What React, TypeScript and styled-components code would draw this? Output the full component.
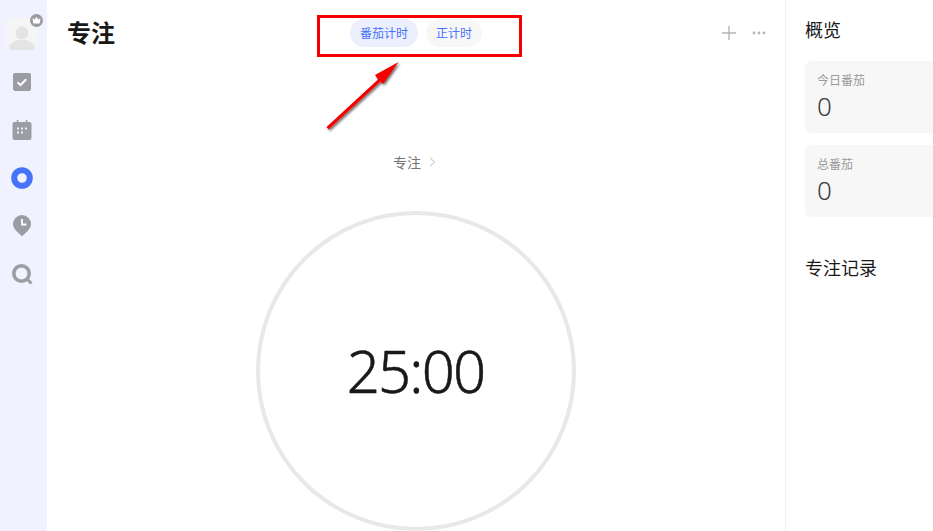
import styled, { createGlobalStyle } from "styled-components";

const GlobalStyle = createGlobalStyle`
  html, body {
    margin: 0;
    padding: 0;
    height: 100%;
    overflow: hidden;
    background: #fff;
  }
  body {
    font-family: "Noto Sans CJK SC", "Noto Sans", sans-serif;
  }
`;

function App() {
  return (
    <Page>
      <GlobalStyle />
      <Sidebar>
        <AvatarWrap>
          <Avatar>
            <svg width="32" height="32" viewBox="0 0 32 32">
              <circle cx="16" cy="15" r="6.500" fill="#e4e4e4" />
              <path d="M3 32c0-6 4-9 9-10h8c5 1 9 4 9 10z" fill="#e4e4e4" />
            </svg>
          </Avatar>
          <Crown>
            <svg width="13" height="13" viewBox="0 0 13 13">
              <circle cx="6.500" cy="6.500" r="6.500" fill="#9a9a9f" />
              <path d="M2.500 4l2.200 1.400L6.500 2.800l1.800 2.600L10.500 4l-.8 5.500H3.300z" fill="#fff" />
            </svg>
          </Crown>
        </AvatarWrap>
        <NavIcon>
          <svg width="18" height="18" viewBox="0 0 18 18">
            <rect width="18" height="18" rx="2" fill="#9c9ca3" />
            <path d="M4.500 9.300l3 2.900 5.700-6" fill="none" stroke="#fff" strokeWidth="2" />
          </svg>
        </NavIcon>
        <NavIcon>
          <svg width="20" height="20" viewBox="0 0 20 20">
            <rect x="0.500" y="2" width="19" height="18" rx="2" fill="#9c9ca3" />
            <path d="M5.500 0v3.500M14.500 0v3.500" stroke="#9c9ca3" strokeWidth="1.500" />
            <path d="M5 8.500h2M9 8.500h2M13 8.500h2M5 12.500h2M9 12.500h2" stroke="#f0f3ff" strokeWidth="1.800" />
          </svg>
        </NavIcon>
        <NavIcon>
          <svg width="22" height="22" viewBox="0 0 22 22">
            <circle cx="11" cy="11" r="7.800" fill="none" stroke="#4772fa" strokeWidth="6" />
          </svg>
        </NavIcon>
        <NavIcon>
          <svg width="18" height="22" viewBox="0 0 18 22">
            <path d="M9 21.500C7 18.500 0 15 0 9a9 9 0 0 1 18 0c0 6-7 9.500-9 12.500z" fill="#9c9ca3" />
            <path d="M9 4V9.500h4.500" fill="none" stroke="#fff" strokeWidth="1.800" />
          </svg>
        </NavIcon>
        <NavIcon>
          <svg width="21" height="21" viewBox="0 0 21 21">
            <circle cx="9.500" cy="9.500" r="7.700" fill="none" stroke="#9c9ca3" strokeWidth="3.600" />
            <path d="M15 15l4.500 4.500" stroke="#9c9ca3" strokeWidth="3" />
          </svg>
        </NavIcon>
      </Sidebar>

      <Main>
        <Header>
          <Title>专注</Title>
          <Tabs>
            <Tab $active>番茄计时</Tab>
            <Tab>正计时</Tab>
          </Tabs>
          <Actions>
            <svg width="14" height="14" viewBox="0 0 14 14">
              <path d="M7 0v14M0 7h14" stroke="#b4b4b4" strokeWidth="1.400" />
            </svg>
            <svg width="14" height="4" viewBox="0 0 14 4">
              <circle cx="2" cy="2" r="1.400" fill="#b4b4b4" />
              <circle cx="7" cy="2" r="1.400" fill="#b4b4b4" />
              <circle cx="12" cy="2" r="1.400" fill="#b4b4b4" />
            </svg>
          </Actions>
        </Header>
        <FocusLink>
          专注
          <svg width="7" height="10" viewBox="0 0 7 10">
            <path d="M1 .8L5.500 5 1 9.200" fill="none" stroke="#b9b9b9" strokeWidth="1" />
          </svg>
        </FocusLink>
        <Timer>25:00</Timer>
        <Highlight />
        <Arrow width="90" height="90" viewBox="0 0 90 90">
          <defs>
            <filter id="arrow-shadow" x="-20%" y="-20%" width="150%" height="150%">
              <feDropShadow dx="1.500" dy="1.500" stdDeviation="1.200" floodColor="#000" floodOpacity="0.6" />
            </filter>
          </defs>
          <path
            d="M6.500 71L58 23.500 55 19 78.500 6 63 28 60.500 25.500 8.500 73.500z"
            fill="#f50000"
            filter="url(#arrow-shadow)"
          />
        </Arrow>
      </Main>

      <Aside>
        <AsideTitle>概览</AsideTitle>
        <StatCard>
          <StatLabel>今日番茄</StatLabel>
          <StatValue>0</StatValue>
        </StatCard>
        <StatCard>
          <StatLabel>总番茄</StatLabel>
          <StatValue>0</StatValue>
        </StatCard>
        <RecordTitle>专注记录</RecordTitle>
      </Aside>
    </Page>
  );
}
export default App;

const Page = styled.div`
  display: flex;
  width: 933px;
  height: 531px;
  overflow: hidden;
`;

const Sidebar = styled.nav`
  flex: 0 0 47px;
  display: flex;
  flex-direction: column;
  align-items: center;
  background: #f0f3ff;
  padding: 18px 3px 0 0;
  box-sizing: border-box;
`;

const AvatarWrap = styled.div`
  position: relative;
  width: 32px;
  height: 32px;
  margin-bottom: 8px;
`;

const Avatar = styled.div`
  width: 32px;
  height: 32px;
  border-radius: 6px;
  background: #f5f5f5;
  overflow: hidden;
  svg {
    display: block;
  }
`;

const Crown = styled.div`
  position: absolute;
  top: -4px;
  right: -5px;
  svg {
    display: block;
  }
`;

const NavIcon = styled.div`
  width: 44px;
  height: 48px;
  display: flex;
  align-items: center;
  justify-content: center;
`;

const Main = styled.main`
  position: relative;
  flex: 0 0 738px;
  display: flex;
  flex-direction: column;
  align-items: center;
  border-right: 1px solid #f2f2f2;
  box-sizing: content-box;
  width: 738px;
`;

const Header = styled.header`
  position: relative;
  align-self: stretch;
  height: 66px;
  display: flex;
  justify-content: center;
`;

const Title = styled.h1`
  position: absolute;
  left: 20px;
  top: 13px;
  margin: 0;
  font-size: 24px;
  line-height: 38px;
  font-weight: 700;
  color: #191919;
`;

const Tabs = styled.div`
  display: flex;
  gap: 8px;
  height: 28px;
  margin-top: 19px;
`;

const Tab = styled.div<{ $active?: boolean }>`
  height: 28px;
  padding: 0 10px;
  border-radius: 14px;
  font-size: 12px;
  line-height: 28px;
  color: #4772fa;
  background: ${(p) => (p.$active ? "#ecf0fe" : "#f7f7f7")};
`;

const Actions = styled.div`
  position: absolute;
  right: 19px;
  top: 26px;
  display: flex;
  align-items: center;
  gap: 16px;
`;

const FocusLink = styled.div`
  display: flex;
  align-items: center;
  gap: 8px;
  height: 20px;
  margin-top: 87px;
  margin-left: -3px;
  font-size: 14px;
  line-height: 20px;
  color: #757575;
`;

const Timer = styled.div`
  width: 320px;
  height: 320px;
  margin-top: 39px;
  margin-left: -1px;
  padding-bottom: 2px;
  flex: none;
  box-sizing: border-box;
  border: 4px solid #e8e8e8;
  border-radius: 50%;
  display: flex;
  align-items: center;
  justify-content: center;
  font-family: "Noto Sans", sans-serif;
  font-size: 58px;
  font-weight: 300;
  letter-spacing: -1.8px;
  -webkit-text-stroke: 0.5px #191919;
  color: #191919;
`;

const Highlight = styled.div`
  position: absolute;
  left: 270px;
  top: 15px;
  width: 205px;
  height: 42px;
  box-sizing: border-box;
  border: 3px solid #f50000;
`;

const Arrow = styled.svg`
  position: absolute;
  left: 273px;
  top: 56px;
`;

const Aside = styled.aside`
  flex: 1;
  padding: 15px 0 0 19px;
  min-width: 0;
`;

const AsideTitle = styled.h2`
  margin: 0 0 17px;
  font-size: 18px;
  line-height: 29px;
  font-weight: 400;
  color: #191919;
`;

const StatCard = styled.div`
  box-sizing: border-box;
  width: 148px;
  height: 72px;
  margin-bottom: 12px;
  padding: 10px 12px;
  border-radius: 6px;
  background: #f7f7f7;
`;

const StatLabel = styled.div`
  font-size: 12px;
  line-height: 18px;
  color: #9a9a9a;
`;

const StatValue = styled.div`
  font-family: "Noto Sans", sans-serif;
  font-size: 26px;
  font-weight: 300;
  line-height: 34px;
  color: #3d3d3d;
`;

const RecordTitle = styled.h2`
  margin: 36px 0 0;
  font-size: 18px;
  line-height: 29px;
  font-weight: 400;
  color: #191919;
`;
